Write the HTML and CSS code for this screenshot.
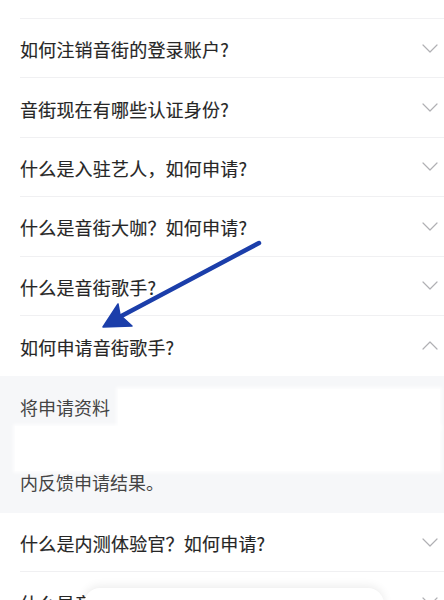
FILE: index.html
```html
<!DOCTYPE html>
<html lang="zh">
<head>
<meta charset="utf-8">
<link rel="stylesheet" href="styles.css">
</head>
<body>
<div class="page">
  <div class="top-gap"></div>
  <ul class="faq">
    <li class="row"><span class="q">如何注销音街的登录账户?</span><svg class="chev" viewBox="0 0 16 9"><path d="M1 1 L8 8 L15 1"/></svg></li>
    <li class="row"><span class="q">音街现在有哪些认证身份?</span><svg class="chev" viewBox="0 0 16 9"><path d="M1 1 L8 8 L15 1"/></svg></li>
    <li class="row"><span class="q">什么是入驻艺人，如何申请?</span><svg class="chev" viewBox="0 0 16 9"><path d="M1 1 L8 8 L15 1"/></svg></li>
    <li class="row"><span class="q">什么是音街大咖？如何申请?</span><svg class="chev" viewBox="0 0 16 9"><path d="M1 1 L8 8 L15 1"/></svg></li>
    <li class="row"><span class="q">什么是音街歌手?</span><svg class="chev" viewBox="0 0 16 9"><path d="M1 1 L8 8 L15 1"/></svg></li>
    <li class="row open"><span class="q">如何申请音街歌手?</span><svg class="chev" viewBox="0 0 16 9"><path d="M1 8 L8 1 L15 8"/></svg></li>
    <li class="answer">
      <p class="line">将申请资料</p>
      <p class="line"></p>
      <p class="line"></p>
      <p class="line">内反馈申请结果。</p>
      <div class="mask mask-a"></div>
      <div class="mask mask-b"></div>
    </li>
    <li class="row"><span class="q">什么是内测体验官？如何申请?</span><svg class="chev" viewBox="0 0 16 9"><path d="M1 1 L8 8 L15 1"/></svg></li>
    <li class="row last"><span class="q">什么是音街达人？如何申请?</span><svg class="chev" viewBox="0 0 16 9"><path d="M1 1 L8 8 L15 1"/></svg></li>
  </ul>
  <svg class="arrow" viewBox="0 0 444 600" width="444" height="600">
    <path class="shaft" d="M259 243 L112 321"/>
    <path class="head" d="M103 327 L118 304 L120 315 L132 326 Z"/>
  </svg>
  <div class="float-card"></div>
</div>
</body>
</html>
```
FILE: styles.css
```css
html, body {
  margin: 0;
  padding: 0;
  background: #ffffff;
}
.page {
  position: relative;
  width: 444px;
  height: 600px;
  overflow: hidden;
  font-family: "Noto Sans CJK SC", "Noto Sans", sans-serif;
}
.top-gap {
  height: 18px;
  margin-left: 20px;
  border-bottom: 1px solid #f1f1f3;
}
.faq {
  list-style: none;
  margin: 0;
  padding: 0;
}
.row {
  display: flex;
  align-items: center;
  justify-content: space-between;
  height: 58.4px;
  margin-left: 20px;
  padding-right: 6px;
  border-bottom: 1px solid #f0f0f2;
}
.row.open {
  height: 60px;
  border-bottom: none;
}
.q {
  font-size: 18px;
  color: #262626;
  font-weight: 400;
  letter-spacing: 0.2px;
  -webkit-text-stroke: 0.15px #262626;
  padding-top: 2px;
}
.chev {
  width: 16px;
  height: 9px;
  fill: none;
  stroke: #b0b0b4;
  stroke-width: 1.2;
  stroke-linecap: round;
  stroke-linejoin: round;
}
.answer {
  position: relative;
  background: #f6f7f9;
  padding: 19px 20px 18px 20px;
}
.line {
  margin: 0;
  height: 25px;
  line-height: 25px;
  font-size: 18px;
  color: #444444;
}
.mask {
  position: absolute;
  background: #ffffff;
  box-shadow: 0 0 3px 2px rgba(255,255,255,0.8);
}
.mask-a {
  left: 118px;
  top: 13px;
  width: 322px;
  height: 40px;
}
.mask-b {
  left: 15px;
  top: 50px;
  width: 425px;
  height: 45px;
}
.arrow {
  position: absolute;
  left: 0;
  top: 0;
  pointer-events: none;
}
.shaft {
  stroke: #1b3eaa;
  stroke-width: 4.5;
  stroke-linecap: round;
  fill: none;
}
.head {
  fill: #1b3eaa;
  stroke: #1b3eaa;
  stroke-width: 1.5;
  stroke-linejoin: round;
}
.float-card {
  position: absolute;
  left: 84px;
  top: 588px;
  width: 300px;
  height: 60px;
  background: #ffffff;
  border-radius: 16px;
  box-shadow: 0 -2px 10px rgba(0,0,0,0.08);
}
```
